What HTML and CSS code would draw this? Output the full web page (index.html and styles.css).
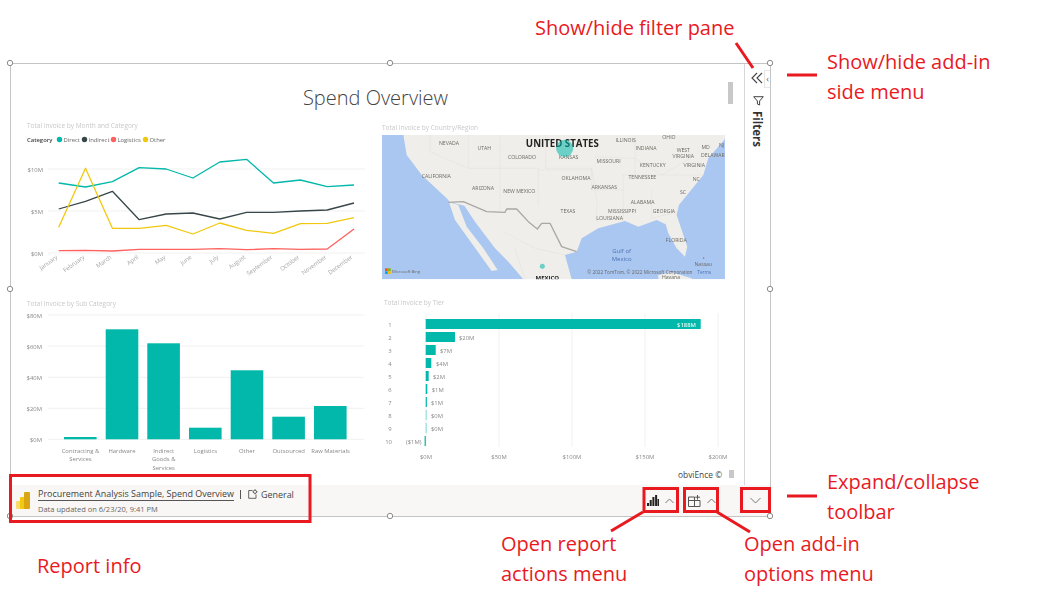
FILE: index.html
```html
<!DOCTYPE html>
<html lang="en">
<head>
<meta charset="utf-8">
<title>Spend Overview add-in</title>
<link rel="stylesheet" href="styles.css">
</head>
<body>
<div class="stage">
  <section class="frame">
    <div class="canvas">
      <main class="report">
        <h1 class="report-title">Spend Overview</h1>
        <div class="charts">
          <svg class="chart" width="371" height="180" viewBox="11 115 371 180">
            <text class="chart-title" x="27" y="127.5">Total Invoice by Month and Category</text>
            <text class="legend-head" x="27" y="142">Category</text>
            <circle cx="59.5" cy="139.5" r="2.7" fill="#01b8aa"/><text class="legend" x="63.5" y="142">Direct</text>
            <circle cx="84.5" cy="139.5" r="2.7" fill="#374649"/><text class="legend" x="88.5" y="142">Indirect</text>
            <circle cx="113.5" cy="139.5" r="2.7" fill="#fd625e"/><text class="legend" x="117.5" y="142">Logistics</text>
            <circle cx="145.5" cy="139.5" r="2.7" fill="#f2c80f"/><text class="legend" x="149.5" y="142">Other</text>
            <path class="grid" d="M48 169H365M48 211H365M48 253H365"/>
            <text class="axis end" x="43" y="171.5">$10M</text>
            <text class="axis end" x="43" y="213.5">$5M</text>
            <text class="axis end" x="43" y="255.5">$0M</text>
            <polyline class="line direct" points="58.7,183 85.5,187 112.4,181.7 139.2,167.7 166.1,169 192.9,178 219.8,162 246.6,159.3 273.5,183 300.4,180 327.2,186.7 354,185"/>
            <polyline class="line indirect" points="58.7,209 85.5,201.3 112.4,191.3 139.2,219.7 166.1,214 192.9,213 219.8,219 246.6,212.3 273.5,212.3 300.4,211 327.2,210 354,203"/>
            <polyline class="line logistics" points="58.7,250.7 85.5,250.3 112.4,251 139.2,249.3 166.1,249.3 192.9,249.3 219.8,248.7 246.6,249.7 273.5,248.7 300.4,249.3 327.2,249 354,229"/>
            <polyline class="line other" points="58.7,227.3 85.5,168.3 112.4,228.3 139.2,228.3 166.1,225.3 192.9,234 219.8,223 246.6,230.3 273.5,233.3 300.4,223.7 327.2,223.3 354,217.7"/>
            <text class="month" transform="translate(58 258) rotate(-36)">January</text>
            <text class="month" transform="translate(85 258) rotate(-36)">February</text>
            <text class="month" transform="translate(112 258) rotate(-36)">March</text>
            <text class="month" transform="translate(139 258) rotate(-36)">April</text>
            <text class="month" transform="translate(166 258) rotate(-36)">May</text>
            <text class="month" transform="translate(192 258) rotate(-36)">June</text>
            <text class="month" transform="translate(219 258) rotate(-36)">July</text>
            <text class="month" transform="translate(246 258) rotate(-36)">August</text>
            <text class="month" transform="translate(273 258) rotate(-36)">September</text>
            <text class="month" transform="translate(300 258) rotate(-36)">October</text>
            <text class="month" transform="translate(327 258) rotate(-36)">November</text>
            <text class="month" transform="translate(353 258) rotate(-36)">December</text>
          </svg>

          <svg class="chart" width="362" height="180" viewBox="382 115 362 180">
            <text class="chart-title" x="382" y="130">Total Invoice by Country/Region</text>
            <svg x="382" y="135" width="343" height="144.3" viewBox="21 60 1029 433">
              <rect class="water" x="21" y="60" width="1029" height="433"/>
              <path class="land" d="M85 60L95 120L140 180L215 250L225 262L268 272L300 320L360 400L400 440L445 493H590L570 420L605 410L620 370L670 340L750 318L790 335L845 315L872 328L880 355L905 400L930 425L937 395L905 300L912 270L985 180L1000 130L1050 72V60Z"/>
              <path class="land" d="M222 262L250 270L275 335L325 400L368 465L350 468L290 385L240 315Z"/>
              <path class="land" d="M850 480L890 472L950 490V493H850Z"/>
              <path class="borders" d="M165 60V110L280 160H375V60M280 60V160M375 160H490V275M375 160V290M512 60V160H650V225M490 165H650M650 160L665 255V320M650 225H745M745 180V315M745 180H860M780 60V180M660 125L780 130L860 180L945 130M860 180H985M830 225V310L910 290M385 350L480 400L570 420M420 400L450 493"/>
              <path class="border-us" d="M220 262L265 260L335 290L390 292L395 282L425 282L460 320L487 342L500 325L525 325L560 395L605 410"/>
              <g class="map-label">
                <text x="222" y="90">NEVADA</text><text x="328" y="106">UTAH</text><text x="441" y="131">COLORADO</text><text x="581" y="131">KANSAS</text>
                <text x="752" y="80">ILLINOIS</text><text x="882" y="73">OHIO</text><text x="813" y="106">INDIANA</text><text x="925" y="111">WEST</text>
                <text x="925" y="129">VIRGINIA</text><text x="992" y="102">MD</text><text x="1040" y="97">NJ</text><text x="1018" y="125">DELAWARE</text>
                <text x="701" y="143">MISSOURI</text><text x="833" y="157">KENTUCKY</text><text x="958" y="157">VIRGINIA</text><text x="184" y="188">CALIFORNIA</text>
                <text x="603" y="194">OKLAHOMA</text><text x="802" y="192">TENNESSEE</text><text x="964" y="198">NC</text><text x="324" y="224">ARIZONA</text>
                <text x="433" y="235">NEW MEXICO</text><text x="688" y="223">ARKANSAS</text><text x="924" y="236">SC</text><text x="803" y="268">ALABAMA</text>
                <text x="579" y="293">TEXAS</text><text x="741" y="293">MISSISSIPPI</text><text x="867" y="293">GEORGIA</text><text x="704" y="316">LOUISIANA</text>
                <text x="904" y="380">FLORIDA</text><text x="985" y="452">Nassau</text><text x="888" y="493">Havana</text>
              </g>
              <text class="map-sea" x="740" y="415">Gulf of</text>
              <text class="map-sea" x="740" y="437">Mexico</text>
              <text class="map-country" x="562" y="95">UNITED STATES</text>
              <text class="map-country small" x="517" y="496">MEXICO</text>
              <circle class="bubble" cx="569" cy="100" r="25"/>
              <circle class="bubble" cx="502" cy="454" r="7"/>
              <rect x="30" y="460" width="8" height="8" fill="#f25022"/><rect x="39" y="460" width="8" height="8" fill="#7fba00"/>
              <rect x="30" y="469" width="8" height="8" fill="#00a4ef"/><rect x="39" y="469" width="8" height="8" fill="#ffb900"/>
              <text class="map-bing" x="51" y="474">Microsoft Bing</text>
              <text class="map-credit" x="637" y="478">© 2022 TomTom, © 2022 Microsoft Corporation</text>
              <text class="map-terms" x="967" y="478">Terms</text>
              <circle cx="986" cy="429" r="2" fill="#e8432e"/><circle cx="889" cy="469" r="2" fill="#e8432e"/>
            </svg>
          </svg>

          <svg class="chart" width="371" height="190" viewBox="11 295 371 190">
            <text class="chart-title" x="27" y="306">Total Invoice by Sub Category</text>
            <path class="grid" d="M48 315H364M48 346H364M48 377.3H364M48 408.3H364M48 439.3H364"/>
            <text class="axis end" x="42" y="318">$80M</text>
            <text class="axis end" x="42" y="349">$60M</text>
            <text class="axis end" x="42" y="380">$40M</text>
            <text class="axis end" x="42" y="411">$20M</text>
            <text class="axis end" x="42" y="442">$0M</text>
            <rect class="bar" x="64" y="437" width="32.6" height="2.3"/>
            <rect class="bar" x="105.7" y="329.3" width="32.6" height="110"/>
            <rect class="bar" x="147.3" y="343.3" width="32.6" height="96"/>
            <rect class="bar" x="189" y="427.7" width="32.6" height="11.6"/>
            <rect class="bar" x="230.7" y="370.3" width="32.6" height="69"/>
            <rect class="bar" x="272.3" y="416.7" width="32.6" height="22.6"/>
            <rect class="bar" x="314" y="406" width="32.6" height="33.3"/>
            <text class="axis mid" x="80.5" y="452.5">Contracting &amp;</text><text class="axis mid" x="80.5" y="461">Services</text>
            <text class="axis mid" x="122" y="452.5">Hardware</text>
            <text class="axis mid" x="163.7" y="452.5">Indirect</text><text class="axis mid" x="163.7" y="461">Goods &amp;</text><text class="axis mid" x="163.7" y="469.5">Services</text>
            <text class="axis mid" x="205.5" y="452.5">Logistics</text>
            <text class="axis mid" x="247" y="452.5">Other</text>
            <text class="axis mid" x="288.7" y="452.5">Outsourced</text>
            <text class="axis mid" x="330.5" y="452.5">Raw Materials</text>
          </svg>

          <svg class="chart" width="362" height="190" viewBox="382 295 362 190">
            <text class="chart-title" x="384" y="305">Total Invoice by Tier</text>
            <path class="grid" d="M426 313V447M499 313V447M572 313V447M645 313V447M718 313V447"/>
            <g class="axis mid">
              <text x="390" y="326.5">1</text><text x="390" y="339.5">2</text><text x="390" y="352.5">3</text><text x="390" y="365.5">4</text><text x="390" y="378.5">5</text>
              <text x="390" y="391.5">6</text><text x="390" y="404.5">7</text><text x="390" y="417.5">8</text><text x="390" y="430.5">9</text><text x="388.5" y="443.5">10</text>
            </g>
            <rect class="bar" x="425.7" y="319" width="275" height="10"/>
            <rect class="bar" x="425.7" y="332" width="29.3" height="10"/>
            <rect class="bar" x="425.7" y="345" width="10" height="10"/>
            <rect class="bar" x="425.7" y="358" width="5.6" height="10"/>
            <rect class="bar" x="425.7" y="371" width="3" height="10"/>
            <rect class="bar" x="425.7" y="384" width="1.6" height="10"/>
            <rect class="bar" x="425.7" y="397" width="1.2" height="10"/>
            <rect class="bar faint" x="425.7" y="410" width="1" height="10"/>
            <rect class="bar faint" x="425.7" y="423" width="1" height="10"/>
            <rect class="bar" x="424.6" y="436" width="1.2" height="10"/>
            <text class="value light" x="696" y="327">$188M</text>
            <text class="axis" x="459" y="340">$20M</text>
            <text class="axis" x="440" y="353">$7M</text>
            <text class="axis" x="436" y="366">$4M</text>
            <text class="axis" x="433" y="379">$2M</text>
            <text class="axis" x="431.7" y="392">$1M</text>
            <text class="axis" x="431" y="405">$1M</text>
            <text class="axis" x="431" y="418">$0M</text>
            <text class="axis" x="431" y="431">$0M</text>
            <text class="axis" x="406" y="444">($1M)</text>
            <text class="axis mid" x="426" y="459">$0M</text>
            <text class="axis mid" x="499" y="459">$50M</text>
            <text class="axis mid" x="572" y="459">$100M</text>
            <text class="axis mid" x="645" y="459">$150M</text>
            <text class="axis mid" x="718" y="459">$200M</text>
          </svg>
        </div>
        <span class="credit">obviEnce ©</span>
        <span class="thumb thumb-top"></span>
        <span class="thumb thumb-bottom"></span>
      </main>
      <aside class="filters">
        <svg class="filters-collapse" width="12" height="12" viewBox="0 0 12 12"><path d="M6 1L1 6L6 11M11 1L6 6L11 11"/></svg>
        <svg class="filters-funnel" width="11" height="10" viewBox="0 0 11 10"><path d="M.7.7H10.3L6.6 5V9L4.4 8V5Z"/></svg>
        <span class="filters-label">Filters</span>
        <span class="side-tab">‹</span>
      </aside>
    </div>
    <footer class="toolbar">
      <div class="info">
        <svg class="pbi-logo" width="14" height="17" viewBox="0 0 14 17">
          <rect x="0" y="9" width="6" height="8" rx="1" fill="#f9dc6b"/>
          <rect x="4" y="5" width="6" height="12" rx="1" fill="#f2c811"/>
          <rect x="8" y="0" width="6" height="17" rx="1" fill="#d9a514"/>
        </svg>
        <div class="info-text">
          <div class="info-line">
            <a class="info-name">Procurement Analysis Sample, Spend Overview</a>
            <span class="info-sep"></span>
            <svg class="workspace-icon" width="10" height="10" viewBox="0 0 10 10"><path d="M4.5 1.5H.7V9.3H8V5.5"/><circle cx="7" cy="2.8" r="1.6"/><path d="M7 .3V1.2M7 4.4V5.3M4.5 2.8H5.4M8.6 2.8H9.5"/></svg>
            <span class="info-workspace">General</span>
          </div>
          <div class="info-date">Data updated on 6/23/20, 9:41 PM</div>
        </div>
      </div>
      <div class="tools">
        <div class="tool tool-actions">
          <svg width="12" height="11" viewBox="0 0 12 11" fill="#222"><rect x="0" y="8" width="2" height="3"/><rect x="2.7" y="5" width="2" height="6"/><rect x="5.4" y="2" width="2" height="9"/><rect x="8.1" y="0" width="2" height="11"/><rect x="10.5" y="4" width="1.5" height="7"/></svg>
          <svg class="chev" width="9" height="6" viewBox="0 0 9 6"><path d="M.5 5L4.5 1L8.5 5"/></svg>
        </div>
        <div class="tool tool-addin">
          <svg class="addin-icon" width="13" height="12" viewBox="0 0 13 12"><path d="M6.5 2H.5V11.5H12V5.5H.5M6.5 2V11.5M9.5 0V4.5M7.2 2.2H12"/></svg>
          <svg class="chev" width="9" height="6" viewBox="0 0 9 6"><path d="M.5 5L4.5 1L8.5 5"/></svg>
        </div>
        <div class="tool tool-expand">
          <svg class="chev" width="11" height="7" viewBox="0 0 11 7"><path d="M.5 1L5.5 6L10.5 1"/></svg>
        </div>
      </div>
    </footer>
  </section>

  <svg class="overlay" width="1039" height="604" viewBox="0 0 1039 604">
    <g class="handles">
      <circle cx="10" cy="63" r="2.7"/><circle cx="390" cy="63" r="2.7"/><circle cx="770" cy="63" r="2.7"/>
      <circle cx="10" cy="289" r="2.7"/><circle cx="770" cy="289" r="2.7"/>
      <circle cx="10" cy="516" r="2.7"/><circle cx="390" cy="516" r="2.7"/><circle cx="770" cy="516" r="2.7"/>
    </g>
    <g class="marks">
      <rect x="10.5" y="475.5" width="299.5" height="46"/>
      <rect x="644" y="488.5" width="33.5" height="23"/>
      <rect x="684.5" y="488.5" width="33" height="23"/>
      <rect x="741.5" y="488.5" width="28" height="23"/>
      <path d="M736 43L753 68M787 75H817M787 496H817M643 512L611 531M717 512L750 532"/>
    </g>
  </svg>

  <p class="note note-filter">Show/hide filter pane</p>
  <p class="note note-side">Show/hide add-in<br>side menu</p>
  <p class="note note-expand">Expand/collapse<br>toolbar</p>
  <p class="note note-info">Report info</p>
  <p class="note note-actions">Open report<br>actions menu</p>
  <p class="note note-addin">Open add-in<br>options menu</p>
</div>
</body>
</html>
```

FILE: styles.css
```css
* { box-sizing: border-box; }
html, body { margin: 0; padding: 0; background: #fff; }
body { font-family: "Open Sans", "Noto Sans", sans-serif; color: #333; }

.stage { position: relative; width: 1039px; height: 604px; overflow: hidden; }

.frame {
  position: absolute; left: 10px; top: 63px;
  width: 761px; height: 454px;
  display: flex; flex-direction: column;
  border: 1px solid #c4c4c4;
  background: #fff;
}
.canvas { flex: 1; min-height: 0; display: flex; }

.report { position: relative; flex: 1; min-width: 0; }
.report-title {
  margin: 0; height: 51px;
  padding-top: 19px;
  text-align: center;
  font-size: 20px; line-height: 30px; font-weight: 300;
  color: #444;
  transform: translateX(-2px);
}
.charts { display: grid; grid-template-columns: 371px 362px; grid-template-rows: 180px 190px; filter: blur(.4px); }
.chart { display: block; }

.chart-title { font-size: 6.5px; fill: #c8c8c8; }
.legend-head { font-size: 5.9px; fill: #444; font-weight: 600; }
.legend { font-size: 5.9px; fill: #666; }
.grid { stroke: #f1f1f1; stroke-width: 1; fill: none; }
.axis, .axis text { font-size: 5.9px; fill: #888; }
.end { text-anchor: end; }
.mid, .mid text { text-anchor: middle; }
.month { font-size: 5.9px; fill: #a5a5a5; text-anchor: end; }
.line { fill: none; stroke-width: 1.3; stroke-linejoin: round; }
.direct { stroke: #01b8aa; }
.indirect { stroke: #374649; }
.logistics { stroke: #fd625e; }
.other { stroke: #f2c80f; }
.bar { fill: #01b8aa; }
.faint { opacity: .45; }
.value { font-size: 5.9px; text-anchor: end; font-weight: 600; }
.light { fill: #e8f7f5; }

.water { fill: #aac7f1; }
.land { fill: #efeeea; }
.borders { fill: none; stroke: #dcd9d2; stroke-width: 1.4; stroke-dasharray: 3 2; }
.border-us { fill: none; stroke: #a9a8a2; stroke-width: 4; stroke-linejoin: round; }
.map-label text { font-size: 15.5px; fill: #6e6a62; text-anchor: middle; }
.map-sea { font-size: 18px; fill: #4d73b5; text-anchor: middle; }
.map-country { font-size: 29px; font-weight: 700; fill: #222; text-anchor: middle; }
.map-country.small { font-size: 18px; }
.bubble { fill: #01b8aa; fill-opacity: .55; stroke: #01b8aa; stroke-opacity: .6; stroke-width: 1; }
.map-bing { font-size: 12.5px; fill: #666; }
.map-credit { font-size: 14.2px; fill: #666; }
.map-terms { font-size: 14.2px; fill: #4d73b5; }

.credit {
  position: absolute; left: 667px; top: 404px;
  font-size: 8.4px; line-height: 14px; color: #444;
}
.thumb { position: absolute; background: #c8c8c8; width: 5px; }
.thumb-top { left: 717px; top: 18px; height: 22px; }
.thumb-bottom { left: 718px; top: 406px; height: 8px; }

.filters {
  position: relative; flex: 0 0 26px;
  display: flex; flex-direction: column; align-items: center;
  padding-top: 8px;
  border-left: 1px solid #d8d8d8;
}
.filters-collapse { fill: none; stroke: #444; stroke-width: 1.1; margin-left: -1px; }
.filters-funnel { margin: 12px 0 0 2px; fill: none; stroke: #444; stroke-width: 1; }
.filters-label {
  margin: 5px 1px 0 0;
  writing-mode: vertical-rl;
  font-size: 11.5px; line-height: 14px; font-weight: 700; color: #333;
}
.side-tab {
  position: absolute; right: 0; top: 6px;
  width: 6px; height: 18px;
  border: 1px solid #e6e6e6; border-right: 0;
  font-size: 9px; line-height: 15px; text-align: center; color: #666;
  background: #fff;
}

.toolbar {
  flex: 0 0 31px;
  display: flex; align-items: center; justify-content: space-between;
  background: #f8f7f5;
}
.info { display: flex; align-items: center; gap: 8px; padding-left: 5px; }
.pbi-logo { flex: none; }
.info-text { display: flex; flex-direction: column; gap: 1px; }
.info-line { display: flex; align-items: center; height: 15px; }
.info-name {
  font-size: 8.95px; line-height: 13px; color: #3f3f3f;
  border-bottom: 1px solid #555;
  white-space: nowrap;
}
.info-sep { width: 1px; height: 9px; background: #555; margin: 0 7px 0 6px; }
.workspace-icon { fill: none; stroke: #555; stroke-width: .9; margin-right: 3px; }
.info-workspace { font-size: 8.95px; color: #444; }
.info-date { font-size: 7.5px; line-height: 12px; color: #666; white-space: nowrap; }

.tools { display: flex; align-items: center; height: 100%; }
.tool { display: flex; align-items: center; gap: 6px; }
.tool-actions { margin-right: 14px; }
.tool-addin { margin-right: 34px; }
.tool-expand { margin-right: 9px; }
.chev { fill: none; stroke: #777; stroke-width: 1; }
.addin-icon { fill: none; stroke: #555; stroke-width: 1; }

.overlay { position: absolute; left: 0; top: 0; pointer-events: none; }
.handles circle { fill: #fff; stroke: #8c8c8c; stroke-width: 1; }
.marks rect { fill: none; stroke: #e81a1f; stroke-width: 3; }
.marks path { fill: none; stroke: #e81a1f; stroke-width: 3; }

.note {
  position: absolute; margin: 0;
  font-size: 20px; line-height: 30px; color: #e81a1f;
  white-space: nowrap;
}
.note-filter { left: 535px; top: 13px; }
.note-side { left: 827px; top: 47px; }
.note-expand { left: 827px; top: 467px; }
.note-info { left: 37px; top: 551px; }
.note-actions { left: 501px; top: 529px; }
.note-addin { left: 744px; top: 529px; }
```
